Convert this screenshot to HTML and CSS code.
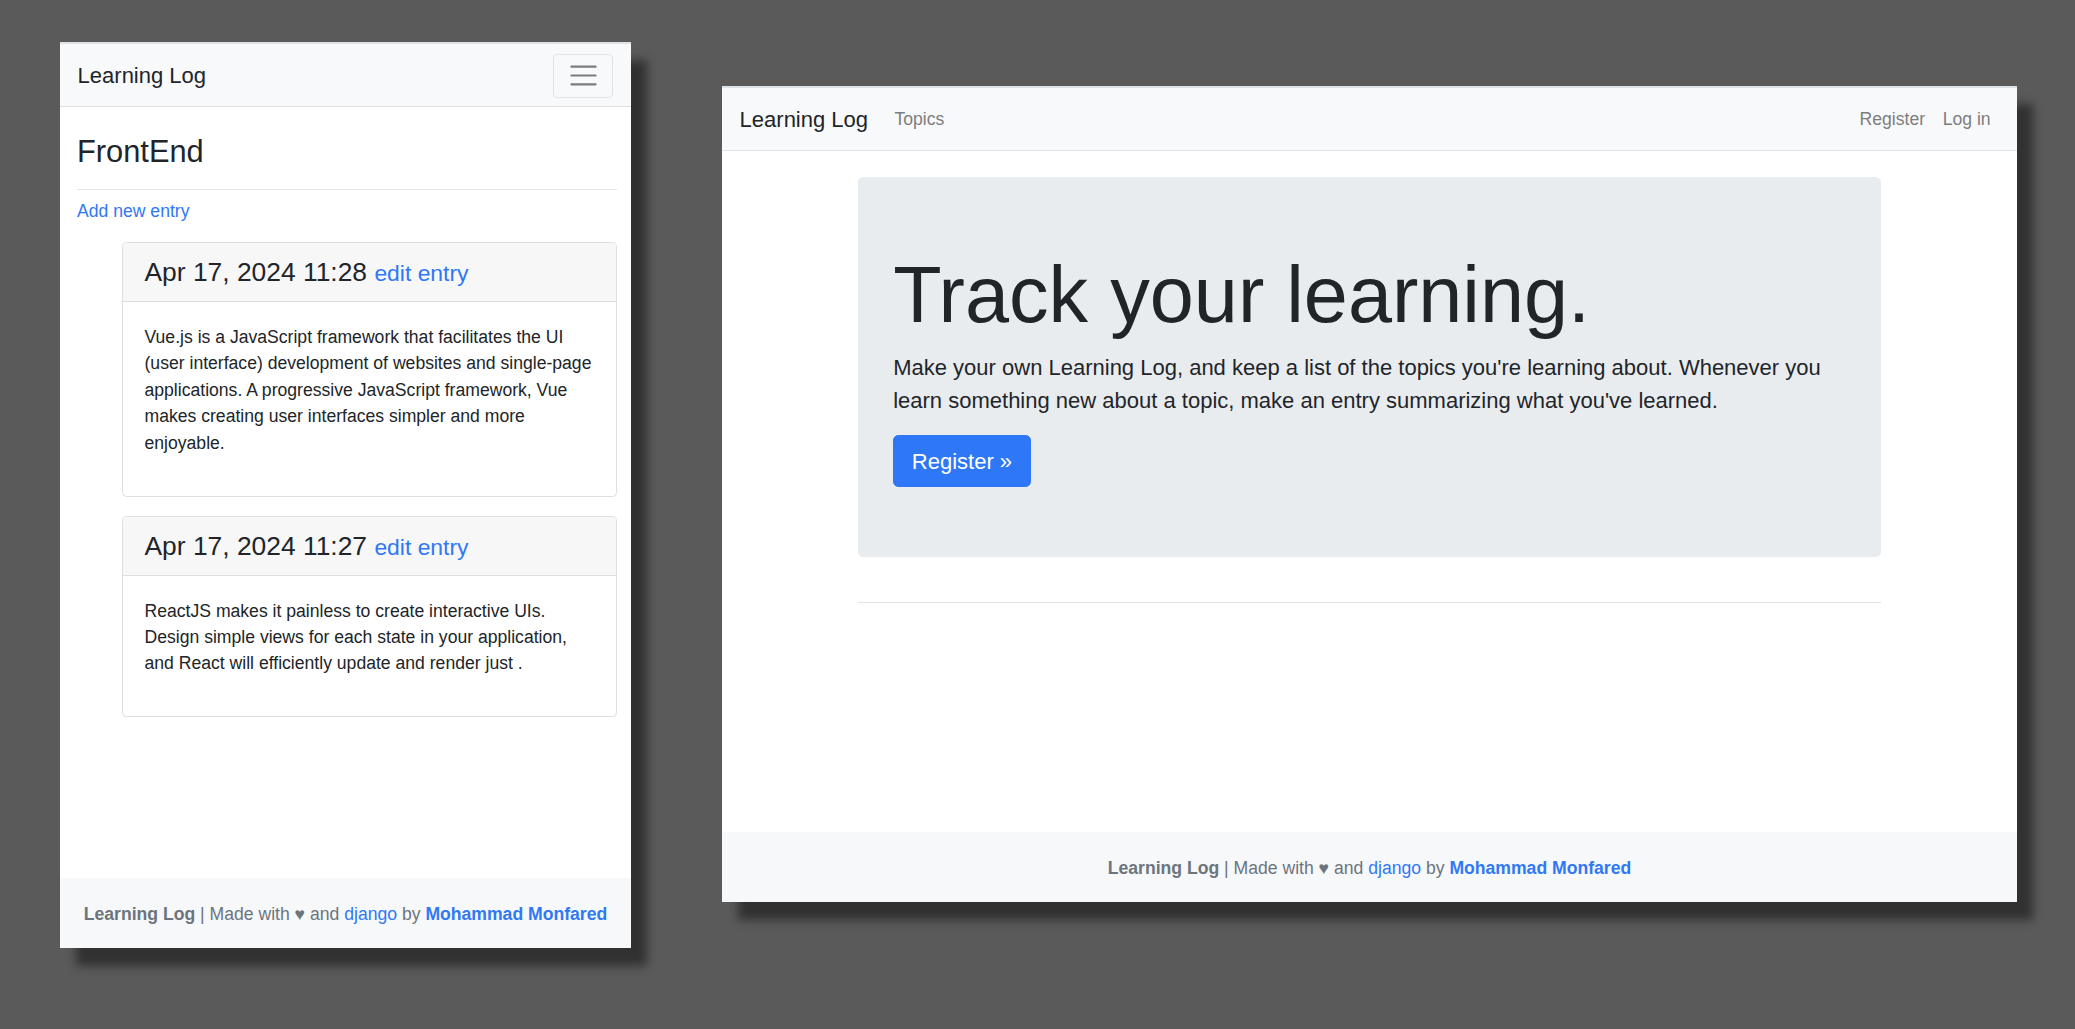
FILE: index.html
```html
<!DOCTYPE html>
<html lang="en">
<head>
<meta charset="utf-8">
<title>Learning Log</title>
<link rel="stylesheet" href="styles.css">
</head>
<body>
<div class="desktop">
  <section class="win win-mobile">
    <nav class="navbar">
      <a class="brand" href="#">Learning Log</a>
      <button class="toggler" type="button" aria-label="Toggle navigation">
        <svg class="toggler-icon" viewBox="0 0 30 30" width="33" height="33"><path d="M4 7h22M4 15h22M4 23h22" stroke="rgba(0,0,0,0.5)" stroke-width="2" stroke-linecap="round" fill="none"/></svg>
      </button>
    </nav>
    <main class="main-mobile">
      <h3 class="topic-title">FrontEnd</h3>
      <hr class="rule-mobile">
      <p class="add-entry"><a class="link" href="#">Add new entry</a></p>
      <ul class="entries">
        <li class="card">
          <div class="card-header"><h4 class="card-title">Apr 17, 2024 11:28 <a class="link edit-link" href="#">edit entry</a></h4></div>
          <div class="card-body"><p class="card-text">Vue.js is a JavaScript framework that facilitates the UI (user interface) development of websites and single-page applications. A progressive JavaScript framework, Vue makes creating user interfaces simpler and more enjoyable.</p></div>
        </li>
        <li class="card">
          <div class="card-header"><h4 class="card-title">Apr 17, 2024 11:27 <a class="link edit-link" href="#">edit entry</a></h4></div>
          <div class="card-body"><p class="card-text">ReactJS makes it painless to create interactive UIs. Design simple views for each state in your application, and React will efficiently update and render just .</p></div>
        </li>
      </ul>
    </main>
    <footer class="foot">
      <span class="foot-strong">Learning Log</span> | Made with &#9829; and <a class="link" href="#">django</a> by <a class="link foot-strong-link" href="#">Mohammad Monfared</a>
    </footer>
  </section>

  <section class="win win-desk">
    <nav class="navbar">
      <a class="brand" href="#">Learning Log</a>
      <ul class="nav-list">
        <li><a class="nav-link" href="#">Topics</a></li>
      </ul>
      <ul class="nav-list nav-right">
        <li><a class="nav-link" href="#">Register</a></li>
        <li><a class="nav-link" href="#">Log in</a></li>
      </ul>
    </nav>
    <main class="main-desk">
      <div class="container">
        <div class="jumbotron">
          <h1 class="display">Track your learning.</h1>
          <p class="lead">Make your own Learning Log, and keep a list of the topics you're learning about. Whenever you learn something new about a topic, make an entry summarizing what you've learned.</p>
          <a class="btn-primary" href="#">Register &raquo;</a>
        </div>
        <hr class="rule-desk">
      </div>
    </main>
    <footer class="foot">
      <span class="foot-strong">Learning Log</span> | Made with &#9829; and <a class="link" href="#">django</a> by <a class="link foot-strong-link" href="#">Mohammad Monfared</a>
    </footer>
  </section>
</div>
</body>
</html>
```

FILE: styles.css
```css
* { box-sizing: border-box; }

html, body {
  margin: 0;
  padding: 0;
}

body {
  background: #5a5a5a;
  font-family: "Liberation Sans", Arial, sans-serif;
  color: #212529;
  font-size: 17.6px;
  line-height: 1.5;
}

.desktop {
  position: relative;
  width: 2075px;
  height: 1029px;
  overflow: hidden;
}

.win {
  position: absolute;
  background: #fff;
  display: flex;
  flex-direction: column;
  border-top: 2px solid #e0e3e6;
  box-shadow: 16px 18px 9px rgba(0, 0, 0, 0.45);
}

.win-mobile {
  left: 60px;
  top: 42px;
  width: 571px;
  height: 906px;
}

.win-desk {
  left: 722px;
  top: 86px;
  width: 1295px;
  height: 816px;
}

a { text-decoration: none; }

.link { color: #3078f6; }

/* navbar */
.navbar {
  flex: none;
  height: 63px;
  background: #f8f9fa;
  border-bottom: 1px solid #dfe2e5;
  display: flex;
  align-items: center;
  padding: 1px 17.6px 0;
}

.win-desk .navbar { height: 62.5px; }

.brand {
  color: #212529;
  font-size: 22px;
  line-height: 1.5;
  margin-right: 17.6px;
}

.toggler {
  margin-left: auto;
  width: 60px;
  height: 44px;
  padding: 0;
  border: 1px solid #e2e3e4;
  border-radius: 4.4px;
  background: transparent;
  display: flex;
  align-items: center;
  justify-content: center;
}

.toggler-icon { display: block; }

.nav-list {
  list-style: none;
  margin: 0;
  padding: 0;
  display: flex;
}

.nav-right { margin-left: auto; }

.nav-link {
  display: block;
  padding: 8.8px;
  color: #7d7e7f;
  font-size: 17.6px;
  line-height: 1.5;
}

/* mobile main */
.main-mobile {
  flex: 1;
  padding: 0 14.5px 0 17px;
}

.topic-title {
  font-size: 30.8px;
  font-weight: 500;
  line-height: 1.2;
  margin: 27px 0 18px;
}

.rule-mobile {
  margin: 0 0 8px;
  border: 0;
  border-top: 1px solid #e5e5e5;
}

.add-entry {
  margin: 0 0 17.6px;
}

.entries {
  list-style: none;
  margin: 0;
  padding-left: 44.5px;
}

.card {
  border: 1px solid #dfdfdf;
  border-radius: 4.4px;
  margin-bottom: 19px;
  overflow: hidden;
}

.card-header {
  background: #f7f7f7;
  border-bottom: 1px solid #dfdfdf;
  padding: 14px 22px 12.4px;
}

.card-title {
  margin: 0;
  font-size: 26.4px;
  font-weight: 500;
  line-height: 1.2;
}

.edit-link {
  font-size: 22.9px;
}

.card-body {
  padding: 22px;
}

.card-text {
  margin: 0 0 17.6px;
}

/* desktop main */
.main-desk {
  flex: 1;
  padding-top: 26.4px;
}

.container {
  width: 1056px;
  margin: 0 auto;
  padding: 0 16.5px;
}

.jumbotron {
  background: #e9ecef;
  border-radius: 5.3px;
  padding: 70.4px 35.2px 70px;
  margin-bottom: 44.6px;
}

.display {
  font-size: 79.2px;
  font-weight: 300;
  line-height: 1.2;
  margin: 0 0 8.8px;
}

.lead {
  font-size: 22px;
  font-weight: 300;
  line-height: 1.5;
  margin: 0 0 17.6px;
}

.btn-primary {
  display: inline-block;
  background: #2e77f6;
  color: #fff;
  font-size: 22px;
  line-height: 1.5;
  padding: 8.8px 17.6px;
  border: 1px solid #2e77f6;
  border-radius: 5.3px;
}

.rule-desk {
  margin: 0;
  border: 0;
  border-top: 1px solid #e3e3e3;
}

/* footer */
.foot {
  flex: none;
  height: 70.5px;
  background: #f7f8fa;
  color: #6c757d;
  text-align: center;
  font-size: 17.6px;
  line-height: 26.4px;
  padding: 23px 0 21px;
  white-space: nowrap;
}

.foot-strong { font-weight: 700; }
.foot-strong-link { font-weight: 700; }
```
